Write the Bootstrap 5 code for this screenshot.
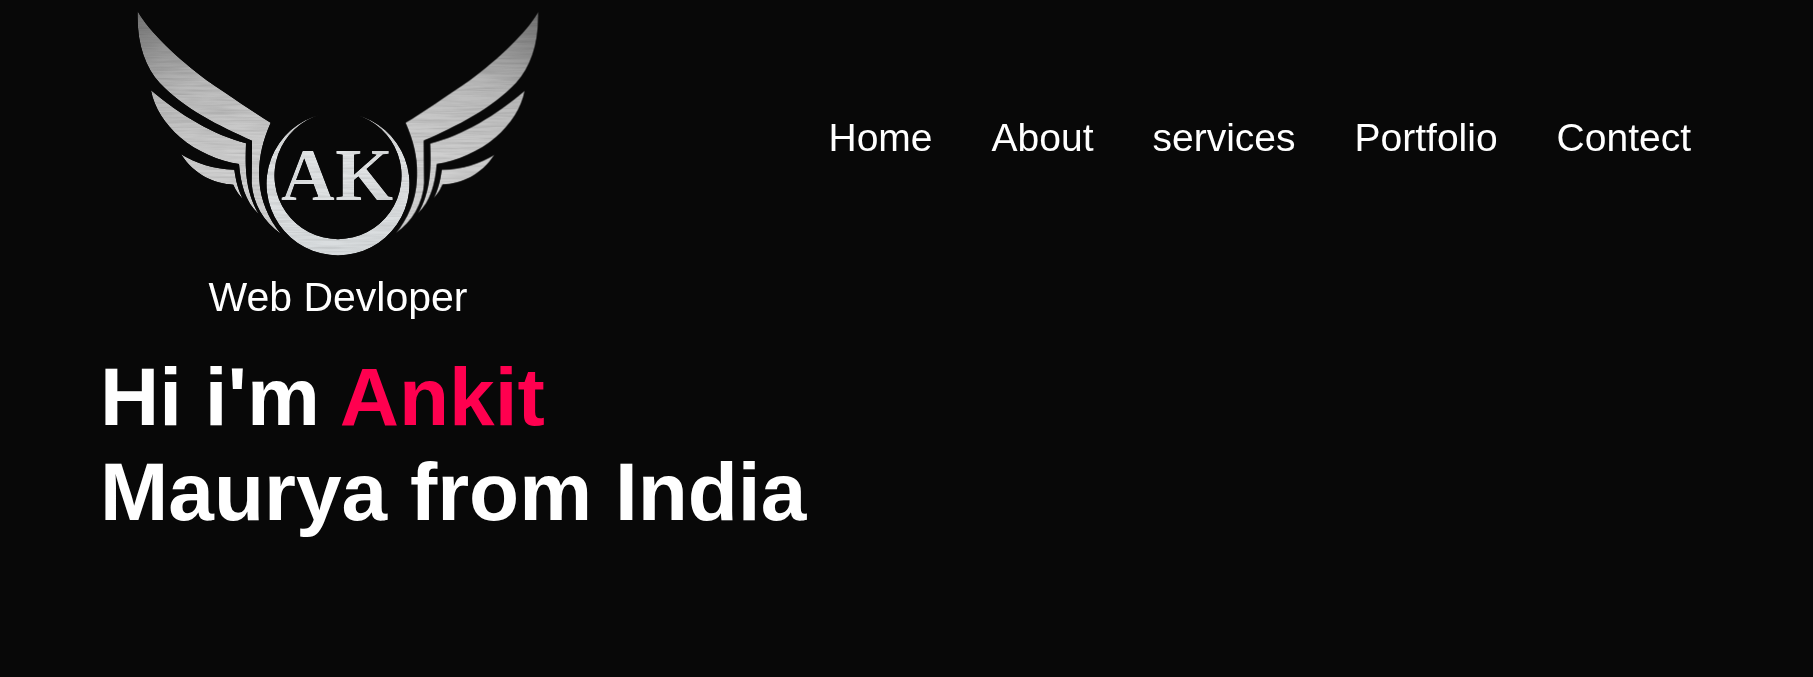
<!DOCTYPE html>
<html lang="en">
<head>
<meta charset="utf-8">
<meta name="viewport" content="width=device-width, initial-scale=1">
<title>Ankit Maurya | Web Devloper</title>
<link href="https://cdn.jsdelivr.net/npm/bootstrap@5.3.0/dist/css/bootstrap.min.css" rel="stylesheet">
<style>
  body { background: #080808; color: #fff; font-family: "Liberation Sans", Arial, sans-serif; }
  .site-header { padding: 0 92px 0 100px; }
  .brand-link { margin-left: 30px; gap: 9px; color: #fff; font-size: 41px; line-height: 48px; }
  .brand-link:hover { color: #fff; }
  .brand-logo { width: 416px; height: 264px; }
  .main-menu { padding-top: 115px; }
  .main-menu .nav-link { padding: 0 30px 0 29px; color: #fff; font-size: 39px; line-height: 46px; }
  .main-menu .nav-link:hover { color: #ff004f; }
  .hero { padding: 28px 100px; }
  .hero h1 { font-size: 82px; line-height: 95px; }
  .hero h1 span { color: #ff004f; }
</style>
</head>
<body>
<header class="site-header d-flex flex-wrap justify-content-between align-items-start">
  <a class="brand-link d-flex flex-column align-items-center text-decoration-none" href="#">
    <svg class="brand-logo d-block" viewBox="130 0 416 264" role="img" aria-label="AK">
      <defs>
        <linearGradient id="steel" gradientUnits="userSpaceOnUse" x1="0" y1="114" x2="0" y2="256">
          <stop offset="0" stop-color="#b4b4b4"/>
          <stop offset=".25" stop-color="#e2e4e5"/>
          <stop offset="1" stop-color="#d8dcde"/>
        </linearGradient>
        <linearGradient id="wingSteel" gradientUnits="userSpaceOnUse" x1="60" y1="30" x2="260" y2="520">
          <stop offset="0" stop-color="#707070"/>
          <stop offset=".25" stop-color="#959595"/>
          <stop offset=".5" stop-color="#bababa"/>
          <stop offset="1" stop-color="#d0d0d0"/>
        </linearGradient>
        <filter id="brushed" filterUnits="userSpaceOnUse" x="130" y="0" width="416" height="264" color-interpolation-filters="sRGB">
          <feTurbulence type="fractalNoise" baseFrequency="0.02 0.4" numOctaves="3" seed="4"/>
          <feColorMatrix values=".2 0 0 0 .87  .2 0 0 0 .87  .2 0 0 0 .87  0 0 0 0 1" result="grain"/>
          <feComposite in="SourceGraphic" in2="grain" operator="arithmetic" k1="1" result="metal"/>
          <feComposite in="metal" in2="SourceAlpha" operator="in"/>
        </filter>
        <g id="wing" transform="translate(120 0) scale(.33333)" fill="url(#wingSteel)">
          <path d="M53 34C88 96 172 175 260 241C330 288 400 337 452 368C425 430 415 480 418 540C421 600 445 655 482 701C430 665 399 610 395 550L396 422C300 380 190 325 120 250C75 200 50 130 53 34Z"/>
          <path d="M93 271C180 345 280 405 378 430C376 500 374 570 416 642C375 605 362 550 357 492C300 485 230 455 180 412C135 372 103 325 93 271Z"/>
          <path d="M183 463C230 490 280 508 343 509C348 545 355 570 368 596C352 580 345 565 340 554C285 552 225 527 183 463Z"/>
        </g>
      </defs>
      <g fill="url(#steel)" filter="url(#brushed)">
        <use href="#wing"/>
        <use href="#wing" transform="translate(676 0) scale(-1 1)"/>
        <path d="M321 114.500A71.500 71.500 0 1 0 355 114.500A63.500 63.500 0 1 1 321 114.500Z"/>
        <text x="337" y="200" text-anchor="middle" font-family="Liberation Serif, Times New Roman, serif" font-weight="700" font-size="75">AK</text>
      </g>
    </svg>
    <span>Web Devloper</span>
  </a>
  <nav class="main-menu" aria-label="Main">
    <ul class="nav">
      <li class="nav-item"><a class="nav-link" href="#">Home</a></li>
      <li class="nav-item"><a class="nav-link" href="#">About</a></li>
      <li class="nav-item"><a class="nav-link" href="#">services</a></li>
      <li class="nav-item"><a class="nav-link" href="#">Portfolio</a></li>
      <li class="nav-item"><a class="nav-link" href="#">Contect</a></li>
    </ul>
  </nav>
</header>
<main class="hero">
  <h1 class="fw-bold m-0">Hi i'm <span>Ankit</span><br>Maurya from India</h1>
</main>
<script src="https://cdn.jsdelivr.net/npm/bootstrap@5.3.0/dist/js/bootstrap.bundle.min.js"></script>
</body>
</html>
